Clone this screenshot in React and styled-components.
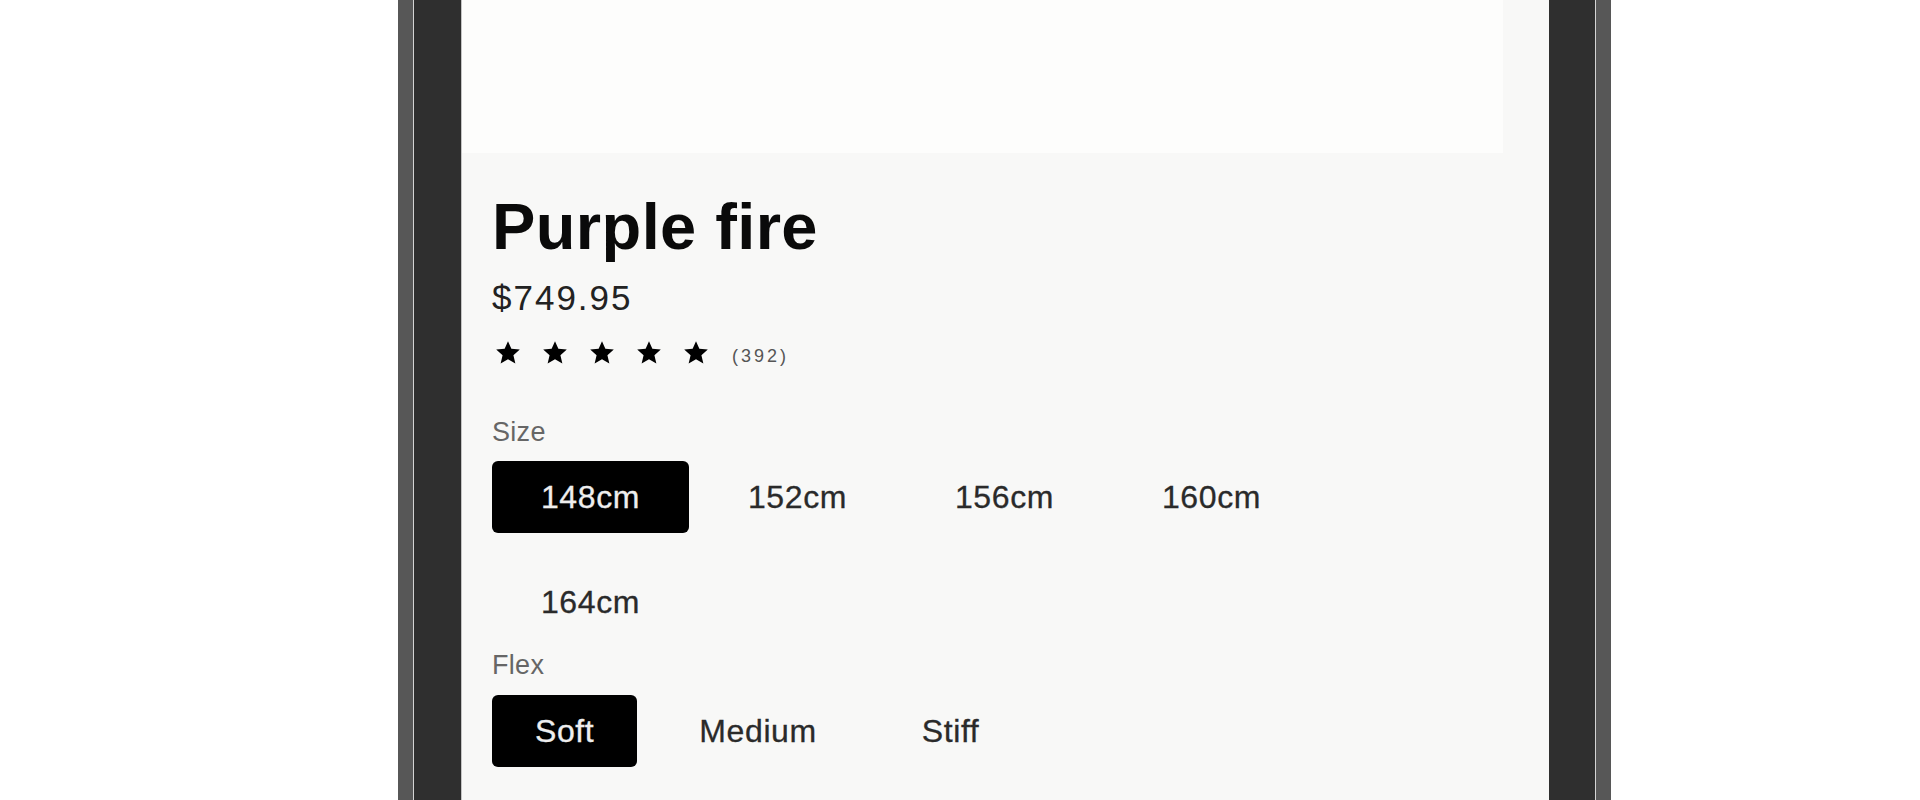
import React, { useState } from 'react';
import styled, { createGlobalStyle } from 'styled-components';

const GlobalStyle = createGlobalStyle`
  html, body {
    margin: 0;
    padding: 0;
    background: #ffffff;
    font-family: "Liberation Sans", Arial, sans-serif;
  }
`;

const Page = styled.div`
  display: flex;
  height: 800px;
  overflow: hidden;
  padding-left: 398px;
`;

const Bezel = styled.div`
  display: flex;
  border-left: 15px solid #575757;
  border-right: 15px solid #575757;
`;

const Frame = styled.div`
  display: flex;
  background: #2f2f2f;
  border-left: 1px solid #d4d4d4;
  border-right: 1px solid #d4d4d4;
  padding: 0 46px 0 47px;
`;

const Screen = styled.div`
  width: 1087px;
  background: #f8f8f7;
  border-left: 1px solid #c4c4c4;
  display: flex;
  flex-direction: column;
`;

const Picture = styled.div`
  height: 153px;
  margin-right: 46px;
  background: #fdfdfc;
  flex-shrink: 0;
`;

const Details = styled.div`
  padding: 41px 30px 0 30px;
  display: flex;
  flex-direction: column;
`;

const Title = styled.h1`
  margin: 0;
  font-size: 65px;
  line-height: 65px;
  font-weight: 700;
  letter-spacing: 0.4px;
  color: #0a0a0a;
`;

const Price = styled.div`
  margin-top: 21px;
  font-size: 35px;
  line-height: 35px;
  letter-spacing: 2px;
  color: #222;
`;

const Rating = styled.div`
  display: flex;
  margin-top: 25px;
  margin-left: 3px;
  height: 25px;
`;

const Stars = styled.div`
  display: flex;
  gap: 21px;
`;

const Count = styled.span`
  align-self: flex-end;
  margin-left: 23px;
  font-size: 18px;
  line-height: 18px;
  letter-spacing: 3px;
  color: #555;
`;

const Label = styled.div`
  margin-top: ${p => p.$top}px;
  font-size: 27px;
  line-height: 27px;
  letter-spacing: 0.3px;
  color: #666;
`;

const SizeGrid = styled.div`
  margin-top: 15px;
  display: grid;
  grid-template-columns: repeat(4, 197px);
  column-gap: 10px;
  row-gap: 33px;
`;

const FlexRow = styled.div`
  margin-top: 16px;
  display: flex;
  gap: 19px;
`;

const Option = styled.button`
  height: 72px;
  padding: ${p => (p.$wide ? '0' : '0 43px')};
  border: none;
  border-radius: 6px;
  font-family: "Liberation Sans", Arial, sans-serif;
  font-size: 32px;
  letter-spacing: 0.6px;
  -webkit-text-stroke: 0.3px currentColor;
  color: ${p => (p.$active ? '#eeeeee' : '#2a2a2a')};
  background: ${p => (p.$active ? '#000' : 'transparent')};
  cursor: pointer;
`;

const Star = () => (
  <svg width="26" height="25" viewBox="0 0 24 23">
    <path
      d="M12 1l3.1 7.1 7.8.7-5.9 5.2 1.8 7.7L12 17.7l-6.8 4 1.8-7.7-5.9-5.2 7.8-.7z"
      fill="#000"
    />
  </svg>
);

const sizes = ['148cm', '152cm', '156cm', '160cm', '164cm'];
const flexes = ['Soft', 'Medium', 'Stiff'];

export default function App() {
  const [size, setSize] = useState('148cm');
  const [flex, setFlex] = useState('Soft');

  return (
    <>
      <GlobalStyle />
      <Page>
        <Bezel>
          <Frame>
            <Screen>
              <Picture />
              <Details>
                <Title>Purple fire</Title>
                <Price>$749.95</Price>
                <Rating>
                  <Stars>
                    {[0, 1, 2, 3, 4].map(i => <Star key={i} />)}
                  </Stars>
                  <Count>(392)</Count>
                </Rating>
                <Label $top={54}>Size</Label>
                <SizeGrid>
                  {sizes.map(s => (
                    <Option key={s} $wide $active={s === size} onClick={() => setSize(s)}>
                      {s}
                    </Option>
                  ))}
                </SizeGrid>
                <Label $top={14}>Flex</Label>
                <FlexRow>
                  {flexes.map(f => (
                    <Option key={f} $active={f === flex} onClick={() => setFlex(f)}>
                      {f}
                    </Option>
                  ))}
                </FlexRow>
              </Details>
            </Screen>
          </Frame>
        </Bezel>
      </Page>
    </>
  );
}
